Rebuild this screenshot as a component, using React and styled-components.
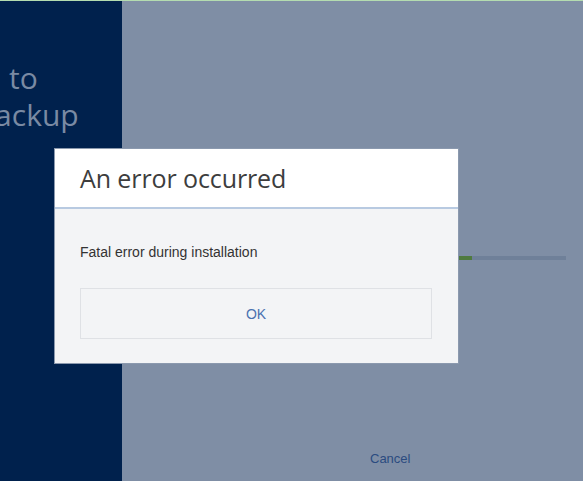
import React from "react";
import styled, { createGlobalStyle } from "styled-components";

const Global = createGlobalStyle`
  html, body { margin: 0; padding: 0; }
  body { width: 583px; height: 481px; overflow: hidden; background: #7f8ea5; }
  #root { width: 583px; height: 481px; }
`;

const Screen = styled.div`
  position: relative;
  width: 583px;
  height: 481px;
  display: flex;
  flex-direction: column;
  border-top: 1px solid #b4dcb0;
  box-sizing: border-box;
  overflow: hidden;
`;

const Columns = styled.div`
  flex: 1;
  display: flex;
`;

const SidePanel = styled.div`
  width: 122px;
  background: #00214d;
  overflow: hidden;
  padding-top: 58px;
  box-sizing: border-box;
`;

const WelcomeLine = styled.div`
  margin-left: ${(p) => p.$shift}px;
  word-spacing: ${(p) => p.$wordGap || 0}px;
  white-space: nowrap;
  font-family: "Open Sans", "Noto Sans", sans-serif;
  font-size: 30px;
  line-height: 37px;
  color: #7a8aa3;
`;

const Main = styled.div`
  flex: 1;
  background: #7f8ea5;
  display: flex;
  flex-direction: column;
`;

const Progress = styled.div`
  margin: 255px 17px 0 17px;
  height: 4px;
  background: #6f8099;
  display: flex;
`;

const ProgressFill = styled.div`
  background: #4f7a3f;
  height: 100%;
`;

const Footer = styled.div`
  margin-top: auto;
  padding: 0 0 14px 248px;
`;

const CancelLink = styled.span`
  font-family: "Liberation Sans", Arial, sans-serif;
  font-size: 13px;
  color: #2b4b80;
`;

const Dialog = styled.div`
  position: absolute;
  left: 55px;
  top: 148px;
  width: 403px;
  background: #f3f4f6;
  box-shadow: 0 0 0 1px #8b99ae;
  display: flex;
  flex-direction: column;
`;

const DialogHeader = styled.div`
  height: 58px;
  background: #ffffff;
  border-bottom: 2px solid #b8cae1;
  display: flex;
  align-items: center;
  padding: 0 25px;
`;

const Title = styled.h1`
  margin: 0;
  font-family: "Open Sans", "Noto Sans", sans-serif;
  font-weight: 400;
  font-size: 25px;
  color: #3d3d3d;
  letter-spacing: -0.1px;
`;

const DialogBody = styled.div`
  padding: 35px 26px 24px 25px;
  display: flex;
  flex-direction: column;
  gap: 28px;
`;

const Message = styled.p`
  margin: 0;
  font-family: "Liberation Sans", Arial, sans-serif;
  font-size: 14px;
  line-height: 16px;
  color: #333333;
`;

const OkButton = styled.button`
  height: 51px;
  width: 100%;
  background: #f3f4f6;
  border: 1px solid #dfe1e5;
  font-family: "Liberation Sans", Arial, sans-serif;
  font-size: 14px;
  color: #4a72b0;
  cursor: pointer;
  padding: 0;
`;

export default function App() {
  return (
    <>
      <Global />
      <Screen>
        <Columns>
          <SidePanel>
            <WelcomeLine $shift={-134} $wordGap={6}>Welcome to</WelcomeLine>
            <WelcomeLine $shift={-136}>Acronis Backup</WelcomeLine>
          </SidePanel>
          <Main>
            <Progress>
              <ProgressFill style={{ width: "333px" }} />
            </Progress>
            <Footer>
              <CancelLink>Cancel</CancelLink>
            </Footer>
          </Main>
        </Columns>
        <Dialog>
          <DialogHeader>
            <Title>An error occurred</Title>
          </DialogHeader>
          <DialogBody>
            <Message>Fatal error during installation</Message>
            <OkButton>OK</OkButton>
          </DialogBody>
        </Dialog>
      </Screen>
    </>
  );
}
